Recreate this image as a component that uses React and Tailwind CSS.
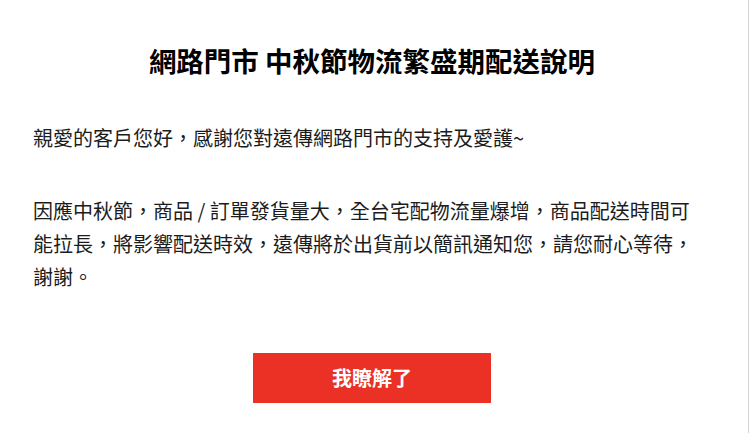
export default function App() {
    return (
        <div className="w-[750px] h-[433px] bg-white overflow-hidden flex" style={{ fontFamily: '"Noto Sans CJK TC", "Noto Sans", sans-serif' }}>
            <div className="w-[744px] h-full flex flex-col">
                <h1 className="mt-[42px] text-center text-[27.5px] leading-[36px] font-bold text-black whitespace-nowrap">
                    網路門市 中秋節物流繁盛期配送說明
                </h1>
                <div className="mt-[43px] pl-[33px] text-[20px] leading-[33px] text-[#1c1c1c] whitespace-nowrap">
                    <p>親愛的客戶您好，感謝您對遠傳網路門市的支持及愛護~</p>
                    <p className="mt-[40px]">
                        因應中秋節，商品 / 訂單發貨量大，全台宅配物流量爆增，商品配送時間可
                        <br />
                        能拉長，將影響配送時效，遠傳將於出貨前以簡訊通知您，請您耐心等待，
                        <br />
                        謝謝。
                    </p>
                </div>
                <div className="mt-[60px] flex justify-center">
                    <button className="w-[238px] h-[50px] bg-[#eb3025] text-white text-[20px] font-bold">
                        我瞭解了
                    </button>
                </div>
            </div>
            <div className="ml-[4px] w-px h-full bg-[#d4d4d4]"></div>
        </div>
    );
}
